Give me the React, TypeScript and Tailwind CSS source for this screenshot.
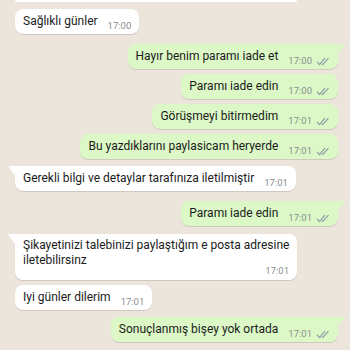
import type { ReactNode } from 'react';

type Msg = {
  text: ReactNode;
  time: string;
  out?: boolean;
  tail?: boolean;
  gap: string;
  wrap?: boolean;
};

const messages: Msg[] = [
  { text: 'Sağlıklı günler', time: '17:00', gap: 'mt-[7px]' },
  { text: 'Hayır benim paramı iade et', time: '17:00', out: true, tail: true, gap: 'mt-[10px]' },
  { text: 'Paramı iade edin', time: '17:00', out: true, gap: 'mt-[5px]' },
  { text: 'Görüşmeyi bitirmedim', time: '17:01', out: true, gap: 'mt-[5px]' },
  { text: 'Bu yazdıklarını paylasicam heryerde', time: '17:01', out: true, gap: 'mt-[5px]' },
  { text: 'Gerekli bilgi ve detaylar tarafınıza iletilmiştir', time: '17:01', tail: true, gap: 'mt-[7px]' },
  { text: 'Paramı iade edin', time: '17:01', out: true, tail: true, gap: 'mt-[10px]' },
  {
    text: (
      <>
        Şikayetinizi talebinizi paylaştığım e posta adresine
        <br />
        iletebilirsinz
      </>
    ),
    time: '17:01',
    tail: true,
    wrap: true,
    gap: 'mt-[8px]',
  },
  { text: 'Iyi günler dilerim', time: '17:01', gap: 'mt-[5px]' },
  { text: 'Sonuçlanmış bişey yok ortada', time: '17:01', out: true, tail: true, gap: 'mt-[7px]' },
];

function Ticks() {
  return (
    <svg width="14" height="9" viewBox="0 0 16 10" fill="none" stroke="#8c9aa3" strokeWidth="1.3" strokeLinecap="round" strokeLinejoin="round">
      <path d="M1.5 5.8 L4 8.5 L10 1.5" />
      <path d="M7 8 L7.6 8.5 L14 1.5" />
    </svg>
  );
}

function Tail({ out }: { out?: boolean }) {
  if (out) {
    return (
      <svg className="absolute top-0 right-[-7px]" width="8" height="11" viewBox="0 0 8 11">
        <path d="M0 0 H8 L0 11 Z" fill="#dcf8c6" />
      </svg>
    );
  }
  return (
    <svg className="absolute top-0 left-[-7px]" width="8" height="11" viewBox="0 0 8 11">
      <path d="M8 0 H0 L8 11 Z" fill="#ffffff" />
    </svg>
  );
}

function Meta({ time, out }: { time: string; out?: boolean }) {
  return (
    <span className="ml-[10px] flex shrink-0 items-center gap-[4px] text-[9.5px] leading-[12px] text-[#8a8f93]">
      {time}
      {out && <Ticks />}
    </span>
  );
}

function Bubble({ m }: { m: Msg }) {
  const side = m.out
    ? 'self-end mr-[12px] bg-[#dcf8c6]'
    : 'self-start ml-[15px] bg-white';
  const corner = m.tail ? (m.out ? 'rounded-tr-none' : 'rounded-tl-none') : '';
  if (m.wrap) {
    return (
      <div className={`relative ${m.gap} ${side} ${corner} rounded-[8px] px-[8px] pt-[4px] pb-[3px] w-[282px] shadow-[0_1px_0.5px_rgba(0,0,0,0.12)]`}>
        {m.tail && <Tail out={m.out} />}
        <div className="whitespace-nowrap text-[12px] leading-[15px] text-[#1b1b1b]">{m.text}</div>
        <div className="-mt-[3px] flex justify-end">
          <Meta time={m.time} out={m.out} />
        </div>
      </div>
    );
  }
  return (
    <div className={`relative ${m.gap} ${side} ${corner} flex items-end rounded-[8px] px-[8px] py-[4px] shadow-[0_1px_0.5px_rgba(0,0,0,0.12)]`}>
      {m.tail && <Tail out={m.out} />}
      <span className="whitespace-nowrap text-[12px] leading-[17px] text-[#1b1b1b]">{m.text}</span>
      <span className="-mb-[2px]">
        <Meta time={m.time} out={m.out} />
      </span>
    </div>
  );
}

export default function App() {
  return (
    <div
      className="flex h-[350px] w-[350px] flex-col overflow-hidden bg-[#ece5dc]"
      style={{ fontFamily: 'Roboto, "Noto Sans", sans-serif' }}
    >
      {/* bottom of the previous message, cut off by the top edge */}
      <div className="ml-[15px] h-[2px] w-[282px] shrink-0 rounded-b-[8px] bg-white" />

      {messages.map((m, i) => (
        <Bubble key={i} m={m} />
      ))}

      {/* next message, only its top shows */}
      <div className="mt-[8px] mr-[12px] h-[20px] w-[110px] shrink-0 self-end rounded-[8px] rounded-tr-none bg-[#dcf8c6]" />
    </div>
  );
}
